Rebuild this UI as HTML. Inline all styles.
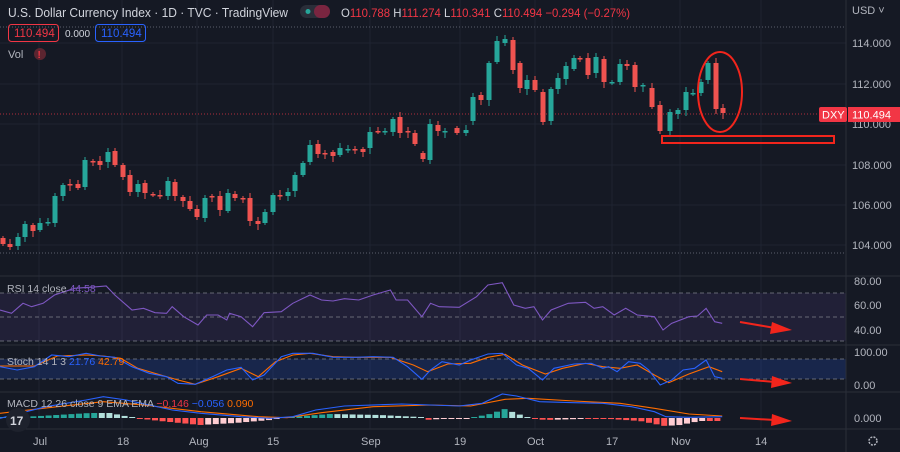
<!DOCTYPE html>
<html><head><meta charset="utf-8"><style>
html,body{margin:0;padding:0;background:#131722;width:900px;height:452px;overflow:hidden}
svg{display:block;font-family:"Liberation Sans",sans-serif}
</style></head><body>
<svg id="s" width="900" height="452" xmlns="http://www.w3.org/2000/svg">
<rect width="900" height="452" fill="#151924"/>
<g id="grid" stroke="#1f2431" stroke-width="1"></g>
<rect x="0" y="293" width="846" height="48" fill="#7e57c2" fill-opacity="0.12"/>
<rect x="0" y="359" width="846" height="20" fill="#2962ff" fill-opacity="0.18"/>
<g stroke="#787b86" stroke-dasharray="4,3" stroke-width="1" opacity="0.8">
<line x1="0" y1="293" x2="846" y2="293"/><line x1="0" y1="317" x2="846" y2="317"/><line x1="0" y1="341" x2="846" y2="341"/>
<line x1="0" y1="359" x2="846" y2="359"/><line x1="0" y1="379" x2="846" y2="379"/>
</g>
<g stroke="#5a5e6b" stroke-dasharray="1,2"><line x1="0" y1="27" x2="846" y2="27"/><line x1="0" y1="253" x2="846" y2="253"/></g>
<line x1="0" y1="114" x2="846" y2="114" stroke="#f23645" stroke-dasharray="1,2" opacity="0.7"/>
<g stroke="#2a2e39"><line x1="0" y1="276" x2="900" y2="276"/><line x1="0" y1="345" x2="900" y2="345"/><line x1="0" y1="392" x2="900" y2="392"/><line x1="0" y1="429" x2="900" y2="429"/><line x1="846" y1="0" x2="846" y2="452"/></g>
<g id="candles"></g>
<g id="hist"></g>
<g id="lines" fill="none" stroke-width="1.1"></g>
<ellipse cx="720" cy="92" rx="22" ry="40" fill="none" stroke="#f2251c" stroke-width="2"/>
<rect x="662" y="136" width="172" height="7" fill="none" stroke="#f2251c" stroke-width="2"/>
<g fill="#f2251c" stroke="#f2251c" stroke-width="2">
<line x1="740" y1="322" x2="775" y2="328"/><polygon points="772,322 792,330 770,334" stroke="none"/>
<line x1="740" y1="379" x2="775" y2="382"/><polygon points="772,376 792,383 771,388" stroke="none"/>
<line x1="740" y1="418" x2="775" y2="420"/><polygon points="772,414 792,421 771,426" stroke="none"/>
</g>
<text x="8" y="17" fill="#d1d4dc" font-size="13" textLength="280" lengthAdjust="spacingAndGlyphs">U.S. Dollar Currency Index · 1D · TVC · TradingView</text>
<rect x="300" y="5" width="30" height="13" rx="6.5" fill="#2a2e39"/><circle cx="308" cy="11.5" r="2.5" fill="#26a69a"/><rect x="314" y="5" width="16" height="13" rx="6.5" fill="#7a2540"/>
<text x="341" y="17" font-size="12" fill="#f23645" textLength="289" lengthAdjust="spacingAndGlyphs"><tspan fill="#d1d4dc">O</tspan>110.788 <tspan fill="#d1d4dc">H</tspan>111.274 <tspan fill="#d1d4dc">L</tspan>110.341 <tspan fill="#d1d4dc">C</tspan>110.494 −0.294 (−0.27%)</text>
<rect x="8.5" y="24.5" width="50" height="17" rx="3" fill="none" stroke="#f23645"/><text x="14" y="37" font-size="11.5" fill="#f23645">110.494</text>
<text x="65" y="37" font-size="10" fill="#d1d4dc">0.000</text>
<rect x="95.5" y="24.5" width="50" height="17" rx="3" fill="none" stroke="#2962ff"/><text x="101" y="37" font-size="11.5" fill="#2962ff">110.494</text>
<text x="8" y="58" font-size="11" fill="#b2b5be">Vol</text><circle cx="40" cy="54" r="6" fill="#5c2530"/><text x="37.5" y="58" font-size="10" fill="#f23645" font-weight="bold">!</text>
<text x="7" y="292" font-size="10.5" fill="#b2b5be">RSI 14 close <tspan fill="#7e57c2">44.58</tspan></text>
<text x="7" y="365" font-size="10.5" fill="#b2b5be">Stoch 14 1 3 <tspan fill="#2962ff">21.76</tspan> <tspan fill="#ff6d00">42.79</tspan></text>
<text x="7" y="407" font-size="10.5" fill="#b2b5be">MACD 12 26 close 9 EMA EMA <tspan fill="#f23645">−0.146</tspan> <tspan fill="#2962ff">−0.056</tspan> <tspan fill="#ff6d00">0.090</tspan></text>
<circle cx="18" cy="420" r="12" fill="#1e222d"/><text x="10" y="425" font-size="12" font-weight="bold" fill="#d1d4dc">17</text>
<g font-size="11" fill="#b2b5be">
<text x="852" y="14">USD ˅</text>
<text x="852" y="47">114.000</text><text x="852" y="88">112.000</text><text x="852" y="128">110.000</text><text x="852" y="169">108.000</text><text x="852" y="209">106.000</text><text x="852" y="249">104.000</text>
<text x="854" y="285">80.00</text><text x="854" y="309">60.00</text><text x="854" y="334">40.00</text><text x="854" y="356">100.00</text><text x="854" y="389">0.00</text><text x="854" y="422">0.000</text>
</g>
<rect x="819" y="107" width="28" height="15" rx="2" fill="#f23645"/><text x="822" y="118.5" font-size="11" fill="#fff">DXY</text>
<rect x="848" y="107" width="52" height="15" fill="#f23645"/><text x="852" y="118.5" font-size="11" fill="#fff">110.494</text>
<g font-size="11" fill="#b2b5be">
<text x="33" y="445">Jul</text><text x="117" y="445">18</text><text x="189" y="445">Aug</text><text x="267" y="445">15</text><text x="361" y="445">Sep</text><text x="454" y="445">19</text><text x="527" y="445">Oct</text><text x="606" y="445">17</text><text x="671" y="445">Nov</text><text x="755" y="445">14</text>
</g>
<circle cx="873" cy="441" r="4" fill="none" stroke="#b2b5be" stroke-width="1.5" stroke-dasharray="2,1.2"/>
</svg>
<script>
var NS="http://www.w3.org/2000/svg";
function el(p,t,a){var e=document.createElementNS(NS,t);for(var k in a)e.setAttribute(k,a[k]);p.appendChild(e);return e;}
var g=document.getElementById('grid');
[43,84,124,165,205,245].forEach(function(y){el(g,'line',{x1:0,y1:y,x2:846,y2:y});});
[39,122,197,273,370,460,535,612,680,761].forEach(function(x){el(g,'line',{x1:x,y1:0,x2:x,y2:429});});
var G="#26a69a",R="#ef5350";
var c=[[3,238,244,R],[10,244,247,R],[18,237,246,G],[25,224,237,G],[33,225,231,R],[40,223,230,G],[48,222,223,G],[55,196,223,G],[63,185,196,G],[70,184,185,R],[78,184,188,R],[85,160,187,G],[93,161,162,R],[100,161,165,R],[108,152,162,G],[115,151,165,R],[123,165,177,R],[130,175,192,R],[138,184,192,G],[145,183,193,R],[153,194,195,R],[160,195,196,R],[168,181,196,G],[175,182,196,R],[183,197,201,R],[190,201,209,R],[197,209,217,R],[205,198,218,G],[212,196,197,R],[220,196,210,R],[228,193,211,G],[235,194,198,R],[243,198,199,R],[250,198,221,R],[258,221,224,R],[265,212,223,G],[273,195,212,G],[280,195,196,R],[288,192,196,G],[295,175,191,G],[303,163,175,G],[310,145,162,G],[318,144,154,R],[325,153,154,R],[333,152,156,R],[340,148,155,G],[348,149,150,G],[355,149,150,R],[363,149,152,R],[370,132,148,G],[378,131,132,R],[385,131,132,G],[393,119,132,G],[400,117,133,R],[408,131,132,R],[415,133,144,R],[423,153,159,R],[430,124,160,G],[438,125,131,R],[445,131,132,G],[457,128,133,R],[466,130,133,G],[473,97,121,G],[481,95,100,R],[489,63,100,G],[497,41,62,G],[505,39,43,G],[513,40,70,R],[520,63,88,R],[527,80,89,G],[535,80,90,R],[543,92,122,R],[551,89,121,G],[558,78,89,G],[566,66,79,G],[574,58,69,G],[580,58,59,R],[588,58,75,R],[596,57,73,G],[604,59,82,R],[612,82,83,G],[620,64,82,G],[627,64,66,R],[635,65,87,R],[643,85,86,G],[652,88,107,R],[660,105,131,R],[670,112,131,G],[678,110,114,G],[686,92,110,G],[693,93,94,G],[701,82,93,G],[708,63,80,G],[716,63,109,R],[723,108,113,R]];
var cg=document.getElementById('candles');
c.forEach(function(d,i){var hw=2+((i*7)%4),lw=2+((i*11)%5);
el(cg,'line',{x1:d[0],y1:d[1]-hw,x2:d[0],y2:d[2]+lw,stroke:d[3],'stroke-width':1});
el(cg,'rect',{x:d[0]-2.5,y:d[1],width:5,height:Math.max(d[2]-d[1],1.5),fill:d[3]});});
var hg=document.getElementById('hist');
function hv(x){var k=[[0,0],[40,2],[90,5],[110,5],[125,2],[135,0],[160,-3],[200,-7],[235,-5],[270,-2],[290,1],[330,4],[380,3],[420,1],[425,-2],[440,-1],[470,0],[490,4],[505,9],[515,5],[530,0],[545,-2],[580,-1],[610,-1],[640,-3],[665,-8],[680,-7],[700,-3],[725,-3]];
for(var i=1;i<k.length;i++)if(x<=k[i][0]){var a=k[i-1],b=k[i];return a[1]+(b[1]-a[1])*(x-a[0])/(b[0]-a[0]);}return 0;}
var prev=0;for(var x=3;x<=725;x+=7.6){var v=hv(x);var up=v>prev;var col=v>=0?(up?"#26a69a":"#b2dfdb"):(up?"#ffcdd2":"#ff5252");prev=v;
var h=Math.max(Math.abs(v),1);el(hg,'rect',{x:x-3,y:v>=0?418-h:418,width:6,height:h,fill:col});}
var lg=document.getElementById('lines');
function pl(pts,col){var s=pts.map(function(p){return (p[0]/1.742).toFixed(1)+","+(270+p[1]/3).toFixed(1);}).join(" ");el(lg,'polyline',{points:s,stroke:col});}
pl([[0,120],[20,130],[40,100],[55,110],[75,100],[95,75],[130,55],[170,50],[185,48],[200,75],[230,120],[250,115],[270,128],[290,130],[300,110],[320,140],[345,165],[360,135],[380,135],[395,150],[400,130],[420,140],[440,170],[460,128],[490,125],[510,100],[540,75],[560,90],[580,93],[600,86],[625,90],[650,75],[680,60],[690,90],[710,90],[735,140],[750,100],[765,110],[800,112],[830,80],[850,45],[875,38],[895,105],[915,115],[930,110],[945,150],[960,120],[990,100],[1020,97],[1035,115],[1050,110],[1070,135],[1090,115],[1110,135],[1140,140],[1155,180],[1170,160],[1200,140],[1215,138],[1230,115],[1245,155],[1258,160]],"#7e57c2");
pl([[0,288],[60,288],[100,258],[150,255],[180,258],[210,265],[240,295],[280,315],[310,330],[340,343],[380,320],[420,295],[450,320],[480,275],[510,255],[540,250],[580,260],[620,262],[680,262],[720,285],[745,305],[780,282],[820,280],[850,262],[880,253],[910,285],[950,312],[980,295],[1020,280],[1050,290],[1080,295],[1110,285],[1140,315],[1165,338],[1200,312],[1235,290],[1258,305]],"#ff6d00");
pl([[0,290],[30,300],[60,290],[90,255],[120,260],[150,250],[175,258],[200,262],[230,290],[260,310],[290,320],[310,340],[340,343],[370,320],[395,300],[420,292],[440,330],[460,315],[490,260],[510,250],[545,250],[580,262],[620,262],[650,260],[685,262],[710,290],[735,328],[750,300],[770,275],[800,285],[820,270],[850,252],[875,250],[900,285],[920,295],[945,330],[965,295],[1000,282],[1030,280],[1050,295],[1060,290],[1075,305],[1095,275],[1115,280],[1130,300],[1150,345],[1170,330],[1190,300],[1210,295],[1230,270],[1245,320],[1258,325]],"#2962ff");
pl([[0,430],[100,410],[180,395],[250,405],[350,425],[450,440],[500,443],[560,428],[650,410],[750,405],[820,408],[880,388],[920,385],[1000,393],[1080,400],[1140,415],[1200,432],[1258,438]],"#ff6d00");
pl([[0,445],[80,410],[150,390],[180,380],[220,390],[300,420],[350,430],[420,440],[470,445],[510,440],[550,420],[600,408],[700,402],[800,408],[840,400],[875,372],[900,378],[940,395],[1000,398],[1050,400],[1100,410],[1140,425],[1160,440],[1200,442],[1258,440]],"#2962ff");
</script>
</body></html>
